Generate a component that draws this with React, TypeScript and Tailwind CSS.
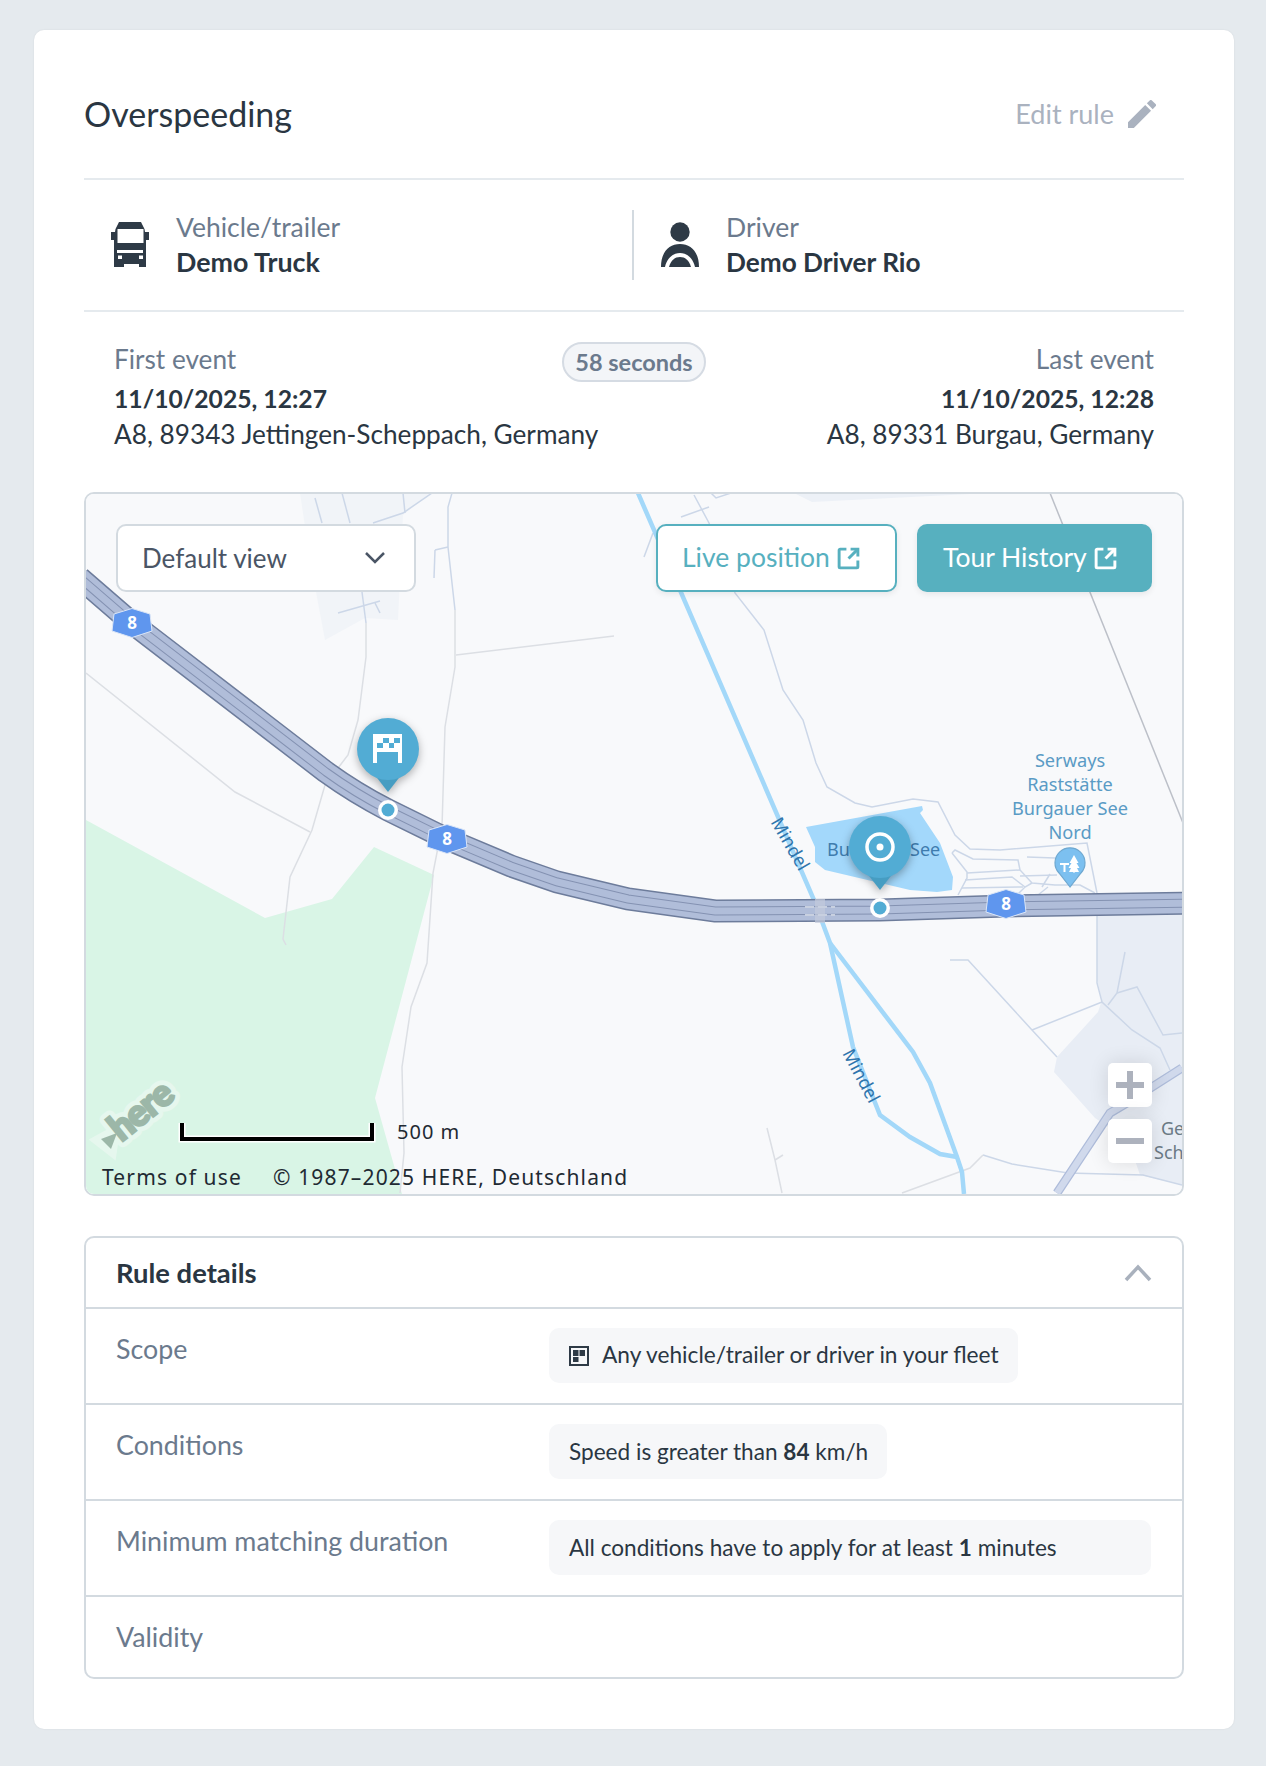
const blueLines = [
  "315,498 322,523",
  "342,493 350,523",
  "373,523 403,513 432,493",
  "403,493 405,513",
  "338,613 380,601",
  "375,603 380,613",
  "362,592 366,623",
  "452,493 448,507 448,547 455,610",
  "435,550 448,547",
  "435,550 434,578",
  "694,495 709,523 735,593 764,630 783,690 803,720 816,763 827,787 855,803 872,807 913,799 938,802 955,835 970,849 1000,850 1087,843 1097,893",
  "681,517 709,507",
  "711,493 716,498 731,493",
  "644,557 653,533",
  "952,853 955,850 973,859 1018,860 1020,870 1032,883 1055,885 1080,885 1095,893",
  "952,853 967,872 967,878 958,895",
  "967,873 1020,870",
  "965,880 1012,877 1025,887",
  "962,888 1023,887",
  "1032,883 1025,887 1017,895",
  "1020,876 1057,875",
  "1027,857 1055,858",
  "1050,874 1042,887",
  "1048,887 1038,895",
  "950,960 968,960 1032,1030 1057,1057",
  "1032,1030 1102,1002",
  "1097,893 1097,983 1102,1002 1132,1030 1160,1048 1170,1070",
  "1125,952 1117,993 1108,1005",
  "1117,993 1137,987 1163,1035 1182,1033",
  "983,1155 1012,1164 1068,1173 1143,1175 1182,1185",
]

const grayLines = [
  "366,623 366,657 358,720 348,755 325,785 312,830 290,877 283,939 286,945",
  "455,610 455,667 445,727 442,827 433,873 427,963 411,1007 402,1067 404,1153 400,1193",
  "456,655 614,636",
  "86,673 235,792 310,832",
  "767,1128 775,1160 782,1193",
  "775,1160 783,1155",
  "902,1193 970,1168 983,1155",
]

const roadPath =
  "M80 578 L132 623 L326 772 Q355 793 388 810 L447 839 L511 866 L557 882 L628 899 L715 911 L880 910 L1006 906 L1190 903"

const Shield = ({x, y}: {x: number; y: number}) => (
  <g transform={`translate(${x} ${y})`}>
    <polygon points="-18,-9 0,-14.5 18,-9 20,8 0,14.5 -20,8" fill="#5f96ee" stroke="#dbe6f7" strokeWidth="1" />
    <text y="6" textAnchor="middle" fontSize="17" fontWeight="700" fill="#ffffff" fontFamily="Noto Sans, sans-serif">8</text>
  </g>
)

const MapPoint = ({x, y}: {x: number; y: number}) => (
  <g>
    <circle cx={x} cy={y} r="10" fill="#ffffff" />
    <circle cx={x} cy={y} r="6.5" fill="#52acd4" />
  </g>
)

const PinShape = ({x, y}: {x: number; y: number}) => (
  <g className="drop-shadow-[0_3px_4px_rgba(0,0,0,0.3)]">
    <polygon points={`${x - 14},${y + 25} ${x + 14},${y + 25} ${x},${y + 43}`} fill="#469dc2" />
    <circle cx={x} cy={y} r="31" fill="#52acd4" />
  </g>
)

const MapCanvas = () => (
  <svg className="absolute inset-0" width="1096" height="700" viewBox="86 494 1096 700">
    <rect x="86" y="490" width="1096" height="704" fill="#f8f9fb" />
    <polygon points="300,493 430,493 403,515 398,620 365,618 325,640 310,560" fill="#f1f4f8" />
    <polygon points="794,493 812,502 990,493" fill="#edf1f7" />
    <polygon points="86,820 265,918 332,899 374,847 434,875 375,1098 402,1194 86,1194" fill="#d9f5e6" />
    <polygon points="1097,913 1182,913 1182,1185 1140,1175 1128,1140 1095,1118 1054,1072 1057,1057 1098,1012 1102,1000 1097,980" fill="#e8edf5" />

    {blueLines.map((p) => (
      <polyline key={p} points={p} fill="none" stroke="#ccd7e8" strokeWidth="1.5" />
    ))}
    {grayLines.map((p) => (
      <polyline key={p} points={p} fill="none" stroke="#dcdfe4" strokeWidth="1.5" />
    ))}
    <line x1="1050" y1="493" x2="1183" y2="823" stroke="#bcc0c8" strokeWidth="1.5" />

    {/* secondary road bottom right */}
    <polyline points="1057,1193 1110,1113 1127,1103 1182,1068" fill="none" stroke="#aebcda" strokeWidth="9" />
    <polyline points="1057,1193 1110,1113 1127,1103 1182,1068" fill="none" stroke="#d0d9ec" strokeWidth="6.5" />

    {/* river */}
    <polyline points="638,493 814,900 830,943 853,1047 880,1115 910,1137 940,1154 957,1157" fill="none" stroke="#a3d8f9" strokeWidth="4.5" />
    <polyline points="830,943 913,1052 930,1083 957,1157 962,1172 964,1194" fill="none" stroke="#a3d8f9" strokeWidth="4.5" />
    <polygon points="806,827 922,806 923,810 920,813 940,843 953,877 952,890 937,892 910,890 825,870 815,862 815,847" fill="#a3d8fb" />

    {/* motorway */}
    <path d={roadPath} fill="none" stroke="#6d7c9b" strokeWidth="23" />
    <path d={roadPath} fill="none" stroke="#b0bdd9" strokeWidth="20" />
    <path d={roadPath} fill="none" stroke="#8492b2" strokeWidth="9" />
    <path d={roadPath} fill="none" stroke="#b0bdd9" strokeWidth="7" />
    <rect x="815" y="899" width="10" height="24" fill="#c3cbdb" opacity="0.7" />
    <path d="M805 907h30M805 915h30" stroke="#c8d0e0" strokeWidth="2" strokeDasharray="9 4" />

    <Shield x={132} y={623} />
    <Shield x={447} y={839} />
    <Shield x={1006} y={904} />

    <g fontFamily="Noto Sans, sans-serif" fontSize="18.2" textAnchor="middle" fill="#5a9bc5">
      <text x="1070" y="767">Serways</text>
      <text x="1070" y="791">Raststätte</text>
      <text x="1070" y="815">Burgauer See</text>
      <text x="1070" y="839">Nord</text>
    </g>
    <g fontFamily="Noto Sans, sans-serif" fontSize="18" fill="#3f7cae">
      <text x="827" y="856">Bu</text>
      <text x="910" y="856">See</text>
    </g>
    <g fontFamily="Noto Sans, sans-serif" fontSize="18" textAnchor="middle" fill="#2f75ad">
      <text transform="translate(790 844) rotate(60)" y="6">Mindel</text>
      <text transform="translate(861 1076) rotate(62)" y="6">Mindel</text>
    </g>
    <g fontFamily="Noto Sans, sans-serif" fontSize="18" fill="#6b7a85">
      <text x="1161" y="1135">Ge</text>
      <text x="1154" y="1159">Sch</text>
    </g>

    {/* parking poi */}
    <path d="M1070 887 L1059 873 A15 15 0 1 1 1081 873 Z" fill="#7cc0f0" stroke="#6fa8d0" strokeWidth="1.2" />
    <path d="M1060 863h9v2h-3.500v7h-2v-7h-3.500z" fill="#ffffff" />
    <path d="M1074 855l4.500 8h-2l3 5h-2.500l2 4h-4v0.500h-2v-0.500h-4l2-4h-2.500l3-5h-2z" fill="#ffffff" />

    {/* end pin */}
    <PinShape x={388} y={749} />
    <rect x="373" y="734" width="29" height="18" fill="#ffffff" />
    <rect x="377" y="752" width="21" height="11" fill="#52acd4" />
    <rect x="373" y="752" width="4" height="11" fill="#ffffff" />
    <rect x="398" y="752" width="4" height="11" fill="#ffffff" />
    <rect x="383" y="738" width="6" height="5" fill="#52acd4" />
    <rect x="394" y="738" width="6" height="5" fill="#52acd4" />
    <rect x="377" y="743" width="6" height="5" fill="#52acd4" />
    <rect x="389" y="743" width="5" height="5" fill="#52acd4" />
    <MapPoint x={388} y={810} />

    {/* start pin */}
    <PinShape x={880} y={847} />
    <circle cx="880" cy="847" r="13" fill="none" stroke="#ffffff" strokeWidth="3.500" />
    <circle cx="880" cy="847" r="3.500" fill="#ffffff" />
    <MapPoint x={880} y={908} />

    {/* here logo */}
    <polygon points="95,1140 117,1128 113,1154" fill="#e6f7ee" stroke="#e6f7ee" strokeWidth="7" />
    <g transform="translate(141 1111) rotate(-39)" fontFamily="Lato, sans-serif" fontSize="37" fontWeight="900" letterSpacing="-1" textAnchor="middle">
      <text y="12" fill="#e6f7ee" stroke="#e6f7ee" strokeWidth="12" strokeLinejoin="round">here</text>
      <text y="12" fill="#9cb7a8" stroke="#9cb7a8" strokeWidth="2.4">here</text>
    </g>
    <polygon points="101,1139 117,1133 111,1149" fill="#9cb7a8" />

    {/* scale */}
    <path d="M182 1123 V1139 H372 V1123" fill="none" stroke="#ffffff" strokeWidth="7" />
    <path d="M182 1123 V1139 H372 V1123" fill="none" stroke="#000000" strokeWidth="4" />
  </svg>
)

const ExternalIcon = () => (
  <svg width="25" height="25" viewBox="0 0 24 24" fill="none" stroke="currentColor" strokeWidth="2.800" className="shrink-0">
    <path d="M10 3H4a1 1 0 0 0-1 1v16a1 1 0 0 0 1 1h16a1 1 0 0 0 1-1v-6" />
    <path d="M14 3h7v7" />
    <path d="M21 3l-9 9" />
  </svg>
)

const RuleRow = ({label, children, last}: {label: string; children?: React.ReactNode; last?: boolean}) => (
  <div className={`grid grid-cols-[433px_602px] pl-[30px] ${last ? "h-[84px]" : "h-[96px] border-b-2 border-[#d3dae0]"}`}>
    <div className="pt-[24px] text-[26.8px] leading-[32px] text-[#6b7a8d]">{label}</div>
    <div className="pt-[19px]">{children}</div>
  </div>
)

export default function App() {
  return (
    <div className="min-h-[1766px] bg-[#e5eaee] pt-[30px] pl-[34px] font-['Lato',sans-serif] text-[#2a3642]">
      <div className="w-[1200px] h-[1699px] bg-white rounded-[10px] px-[50px] shadow-[0_0_2px_rgba(0,0,0,0.08)]">
        <div className="h-[150px] border-b-2 border-[#e5eaee] flex items-center justify-between pt-[20px]">
          <h1 className="text-[34px] leading-[44px] font-normal">Overspeeding</h1>
          <div className="flex items-center gap-[14px] pr-[28px] text-[#aab2bf]">
            <span className="text-[27px]">Edit rule</span>
            <svg width="28" height="28" viewBox="3 3 18 18" fill="currentColor">
              <path d="M3 17.250V21h3.750L17.810 9.940l-3.750-3.750L3 17.250zM20.710 7.040a1 1 0 0 0 0-1.410l-2.340-2.340a1 1 0 0 0-1.410 0l-1.830 1.830 3.750 3.750 1.830-1.830z" />
            </svg>
          </div>
        </div>

        <div className="h-[132px] border-b-2 border-[#e5eaee] flex items-center">
          <div className="w-[548px] flex items-center pl-[27px] gap-[27px]">
            <svg width="38" height="46" viewBox="0 0 38 46" fill="#2e3a46">
              <path
                fillRule="evenodd"
                d="M8 0h22l3.500 7 .5 3h4v8h-3v27h-7v-3H13v3H3V18H0v-8h4l.5-3zM6.500 7v14h26V7zM6 28v3h26v-3zM7 33.500v3.500h4v-3.500zM28 33.500v3.500h4v-3.500z"
              />
            </svg>
            <div>
              <div className="text-[26.5px] leading-[35px] text-[#6b7a8d]">Vehicle/trailer</div>
              <div className="text-[26.8px] leading-[35px] font-bold">Demo Truck</div>
            </div>
          </div>
          <div className="h-[70px] border-l-2 border-[#d3dae0]" />
          <div className="flex items-center pl-[27px] gap-[27px]">
            <svg width="38" height="46" viewBox="0 0 38 46" fill="#2e3a46">
              <circle cx="19" cy="10" r="9.700" />
              <path d="M0 45C0 30 8 22 19 22s19 8 19 23h-4c-2-9-8-14-15-14S6 36 4 45z" />
              <path d="M8 45c2-7 6-10 11-10s9 3 11 10z" />
            </svg>
            <div>
              <div className="text-[26.5px] leading-[35px] text-[#6b7a8d]">Driver</div>
              <div className="text-[26.2px] leading-[35px] font-bold">Demo Driver Rio</div>
            </div>
          </div>
        </div>

        <div className="relative h-[180px] px-[30px] pt-[29px] flex justify-between text-[26.2px] leading-[36px]">
          <div>
            <div className="text-[#6b7a8d]">First event</div>
            <div className="mt-[4px] text-[24.7px] font-bold">11/10/2025, 12:27</div>
            <div className="mt-[-1px]">A8, 89343 Jettingen-Scheppach, Germany</div>
          </div>
          <div className="text-right">
            <div className="text-[#6b7a8d]">Last event</div>
            <div className="mt-[4px] text-[24.7px] font-bold">11/10/2025, 12:28</div>
            <div className="mt-[-1px]">A8, 89331 Burgau, Germany</div>
          </div>
          <div className="absolute left-[478px] top-[30px] h-[40px] w-[144px] rounded-full border-2 border-[#d5dbe3] bg-[#f3f5f8] flex items-center justify-center text-[23.5px] font-bold text-[#6b7a8d]">
            58 seconds
          </div>
        </div>

        <div className="relative h-[704px] border-2 border-[#d3dae0] rounded-[10px] overflow-hidden">
          <MapCanvas />
          <div className="absolute left-[30px] right-[30px] top-[30px] flex">
            <div className="h-[68px] w-[300px] rounded-[10px] border-2 border-[#d3dae0] bg-white flex items-center justify-between pl-[24px] pr-[28px] text-[26px] text-[#4a5565]">
              Default view
              <svg width="22" height="14" viewBox="0 0 22 14" fill="none" stroke="#4a5565" strokeWidth="2.500">
                <path d="M2 2l9 9 9-9" />
              </svg>
            </div>
            <div className="ml-auto h-[68px] w-[241px] rounded-[10px] border-2 border-[#57b0bf] bg-white flex items-center gap-[6px] pl-[24px] text-[26.5px] text-[#57b0bf] shadow-[0_2px_6px_rgba(0,0,0,0.08)]">
              Live position <ExternalIcon />
            </div>
            <div className="ml-[20px] h-[68px] w-[235px] rounded-[10px] bg-[#57b0bf] flex items-center gap-[6px] pl-[26px] text-[26.5px] text-white shadow-[0_2px_6px_rgba(0,0,0,0.08)]">
              Tour History <ExternalIcon />
            </div>
          </div>
          <div className="absolute left-[1022px] top-[569px] flex flex-col gap-[12px]">
            <div className="h-[44px] w-[44px] rounded-[5px] bg-white flex items-center justify-center shadow-[0_0_20px_rgba(0,0,0,0.12)]">
              <svg width="28" height="28" viewBox="0 0 28 28" fill="#adb2bd">
                <path d="M11 0h6v11h11v6H17v11h-6V17H0v-6h11z" />
              </svg>
            </div>
            <div className="h-[44px] w-[44px] rounded-[5px] bg-white flex items-center justify-center shadow-[0_0_20px_rgba(0,0,0,0.12)]">
              <svg width="28" height="6" viewBox="0 0 28 6" fill="#adb2bd">
                <rect width="28" height="6" />
              </svg>
            </div>
          </div>
          <div className="absolute left-[311px] top-[625px] text-[20px] leading-[26px] tracking-[1px] text-[#1f2a33] font-['Noto_Sans',sans-serif]">500 m</div>
          <div className="absolute left-[16px] top-[669px] flex gap-[31px] text-[21px] leading-[28px] tracking-[1.15px] text-[#1f2a33] font-['Noto_Sans',sans-serif]">
            <span>Terms of use</span>
            <span>© 1987–2025 HERE, Deutschland</span>
          </div>
        </div>

        <div className="mt-[40px] h-[443px] border-2 border-[#d3dae0] rounded-[10px]">
          <div className="h-[71px] border-b-2 border-[#d3dae0] flex items-center justify-between pl-[30px] pr-[30px]">
            <span className="text-[27.4px] font-bold">Rule details</span>
            <svg width="28" height="18" viewBox="0 0 28 18" fill="none" stroke="#a9b1bd" strokeWidth="3.500">
              <path d="M2 16L14 3l12 13" />
            </svg>
          </div>
          <RuleRow label="Scope">
            <div className="inline-flex h-[55px] w-[469px] items-center gap-[13px] rounded-[10px] bg-[#f6f7f9] pl-[20px] text-[22.7px]">
              <svg width="20" height="20" viewBox="0 0 20 20" className="shrink-0">
                <rect x="1" y="1" width="18" height="18" fill="none" stroke="#2e3a46" strokeWidth="2" />
                <rect x="4" y="4" width="5.500" height="6" fill="#2e3a46" />
                <rect x="10.500" y="4" width="5.500" height="6" fill="#2e3a46" />
                <rect x="4" y="11" width="5.500" height="5" fill="#2e3a46" />
              </svg>
              Any vehicle/trailer or driver in your fleet
            </div>
          </RuleRow>
          <RuleRow label="Conditions">
            <div className="inline-flex h-[55px] w-[338px] items-center rounded-[10px] bg-[#f6f7f9] pl-[20px] text-[22.6px] whitespace-pre">
              Speed is greater than <b>84</b> km/h
            </div>
          </RuleRow>
          <RuleRow label="Minimum matching duration">
            <div className="flex h-[55px] w-[602px] items-center rounded-[10px] bg-[#f6f7f9] pl-[20px] text-[22.6px] whitespace-pre">
              All conditions have to apply for at least <b>1</b> minutes
            </div>
          </RuleRow>
          <RuleRow label="Validity" last />
        </div>
      </div>
    </div>
  )
}
